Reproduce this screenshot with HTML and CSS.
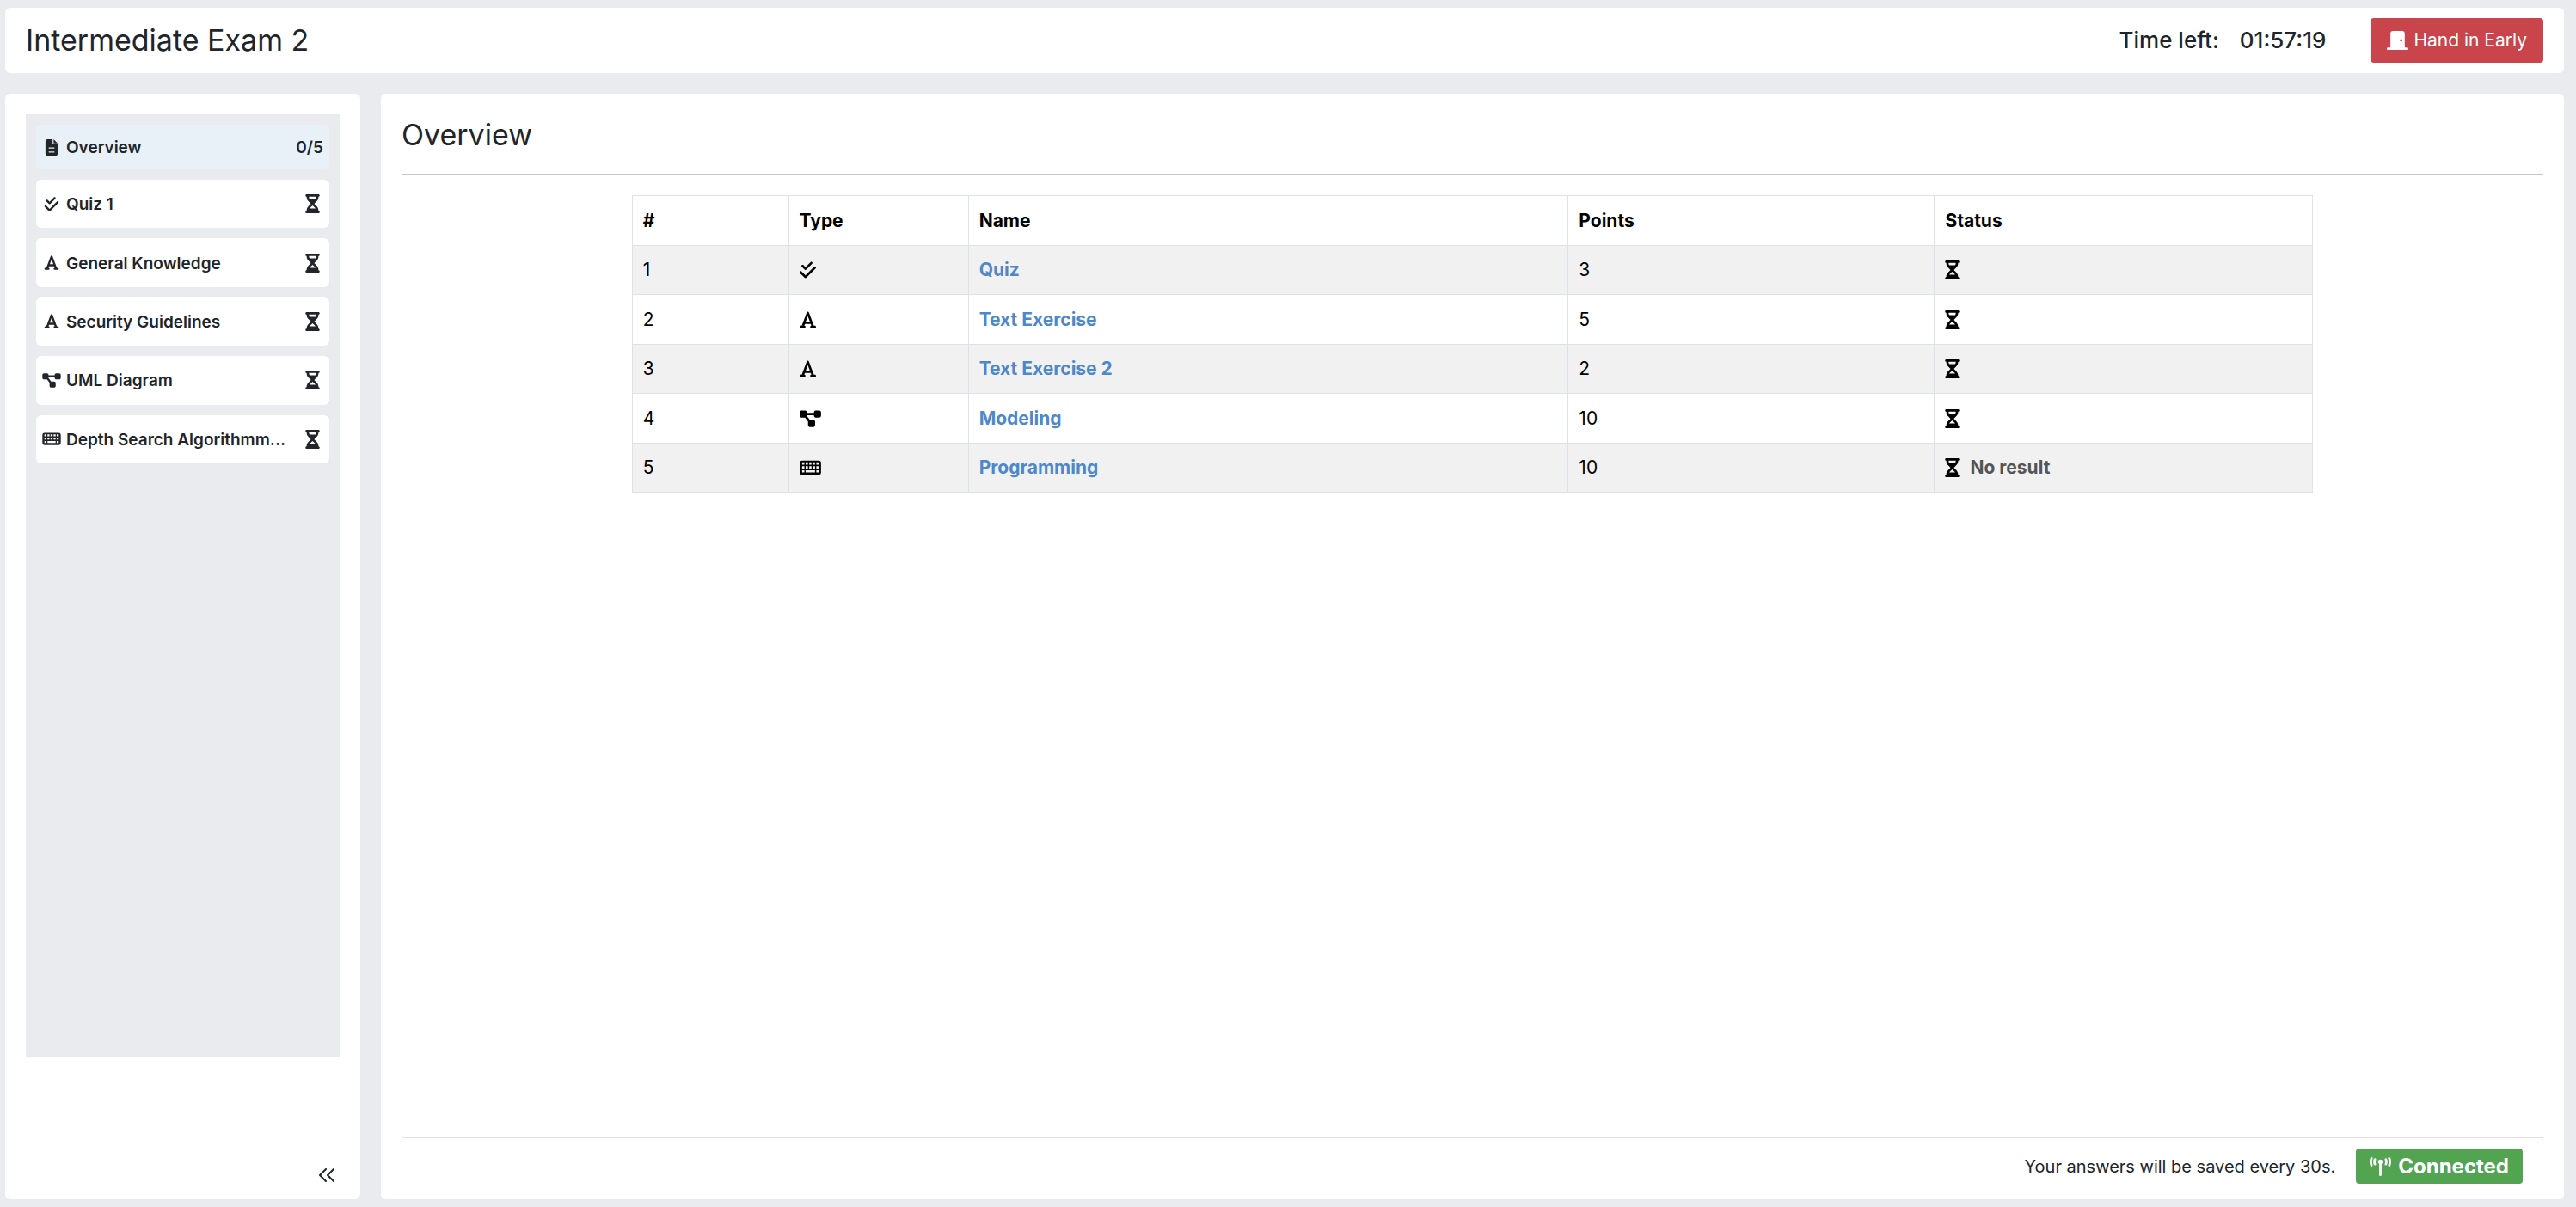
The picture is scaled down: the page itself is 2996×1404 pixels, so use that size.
FILE: index.html
```html
<!DOCTYPE html>
<html lang="en">
<head>
<meta charset="utf-8">
<title>Intermediate Exam 2</title>
<link rel="stylesheet" href="styles.css">
</head>
<body>
<svg class="sprite" aria-hidden="true">
  <symbol id="hourglass" viewBox="0 0 384 512"><path d="M32 0C14.3 0 0 14.3 0 32S14.3 64 32 64V75c0 42.4 16.9 83.1 46.9 113.1L146.7 256 78.9 323.9C48.9 353.9 32 394.6 32 437v11c-17.7 0-32 14.3-32 32s14.3 32 32 32H352c17.7 0 32-14.3 32-32s-14.3-32-32-32V437c0-42.4-16.9-83.1-46.9-113.1L237.3 256l67.9-67.9c30-30 46.9-70.7 46.9-113.1V64c17.7 0 32-14.3 32-32s-14.3-32-32-32H32zM96 75V64H288V75c0 19-5.6 37.4-16 53H112c-10.3-15.6-16-34-16-53zm16 309c3.5-5.3 7.6-10.3 12.1-14.9L192 301.3l67.9 67.9c4.6 4.6 8.6 9.6 12.1 14.9H112z"/></symbol>
  <symbol id="text" viewBox="0 0 448 512"><path d="M254 52.8C249.3 40.3 237.3 32 224 32s-25.3 8.3-30 20.8L57.8 416H32c-17.7 0-32 14.3-32 32s14.3 32 32 32h96c17.7 0 32-14.3 32-32s-14.3-32-32-32h-1.8l18-48H303.8l18 48H320c-17.7 0-32 14.3-32 32s14.3 32 32 32h96c17.7 0 32-14.3 32-32s-14.3-32-32-32H390.2L254 52.8zM279.8 304H168.2L224 155.1 279.8 304z"/></symbol>
  <symbol id="quiz" viewBox="0 0 448 512"><path d="M342.6 86.6c12.5-12.5 12.5-32.8 0-45.3s-32.8-12.5-45.3 0L160 178.7l-57.4-57.4c-12.5-12.5-32.8-12.5-45.3 0s-12.5 32.8 0 45.3l80 80c12.5 12.5 32.8 12.5 45.3 0l160-160zm96 128c12.5-12.5 12.5-32.8 0-45.3s-32.8-12.5-45.3 0L160 402.7 54.6 297.4c-12.5-12.5-32.8-12.5-45.3 0s-12.5 32.8 0 45.3l128 128c12.5 12.5 32.8 12.5 45.3 0l256-256z"/></symbol>
  <symbol id="modeling" viewBox="0 0 576 512"><path d="M0 80C0 53.5 21.5 32 48 32h96c26.5 0 48 21.5 48 48V96H384V80c0-26.5 21.5-48 48-48h96c26.5 0 48 21.5 48 48v96c0 26.5-21.5 48-48 48H432c-26.5 0-48-21.5-48-48V160H192v16c0 1.7-.1 3.4-.3 5L272 288h96c26.5 0 48 21.5 48 48v96c0 26.5-21.5 48-48 48H272c-26.5 0-48-21.5-48-48V336c0-1.7 .1-3.4 .3-5L144 224H48c-26.5 0-48-21.5-48-48V80z"/></symbol>
  <symbol id="keyboard" viewBox="0 0 576 512"><path fill-rule="evenodd" d="M64 64H512a64 64 0 0 1 64 64V384a64 64 0 0 1-64 64H64a64 64 0 0 1-64-64V128a64 64 0 0 1 64-64zM64 112h62v62H64zM160 112h62v62h-62zM256 112h62v62h-62zM352 112h62v62h-62zM448 112h62v62h-62zM64 216h62v62H64zM160 216h62v62h-62zM256 216h62v62h-62zM352 216h62v62h-62zM448 216h62v62h-62zM64 324h62v62H64zM160 324h254v62H160zM448 324h62v62h-62z"/></symbol>
  <symbol id="file" viewBox="0 0 384 512"><path d="M64 0C28.7 0 0 28.7 0 64V448c0 35.3 28.7 64 64 64H320c35.3 0 64-28.7 64-64V160H256c-17.7 0-32-14.3-32-32V0H64zM256 0V128H384L256 0zM112 256H272c8.8 0 16 7.2 16 16s-7.2 16-16 16H112c-8.8 0-16-7.2-16-16s7.2-16 16-16zm0 64H272c8.8 0 16 7.2 16 16s-7.2 16-16 16H112c-8.8 0-16-7.2-16-16s7.2-16 16-16zm0 64H272c8.8 0 16 7.2 16 16s-7.2 16-16 16H112c-8.8 0-16-7.2-16-16s7.2-16 16-16z"/></symbol>
  <symbol id="door" viewBox="0 0 576 512"><path d="M96 64c0-35.3 28.7-64 64-64H416c35.3 0 64 28.7 64 64V448h64c17.7 0 32 14.3 32 32s-14.3 32-32 32H32c-17.7 0-32-14.3-32-32s14.3-32 32-32H96V64zM384 288a32 32 0 1 0 0-64 32 32 0 1 0 0 64z"/></symbol>
  <symbol id="broadcast" viewBox="0 0 576 512"><path d="M80.3 44C69.8 69.9 64 98.2 64 128s5.8 58.1 16.3 84c6.6 16.4-1.3 35-17.7 41.7s-35-1.3-41.7-17.7C7.4 202.6 0 166.1 0 128S7.4 53.4 20.9 20C27.6 3.6 46.2-4.3 62.6 2.3S86.9 27.6 80.3 44zM555.1 20C568.6 53.4 576 89.9 576 128s-7.4 74.6-20.9 108c-6.6 16.4-25.3 24.3-41.7 17.7S489.1 228.4 495.7 212c10.5-25.9 16.3-54.2 16.3-84s-5.8-58.1-16.3-84C489.1 27.6 497 9 513.4 2.3s35 1.3 41.7 17.7zM352 128c0 23.7-12.9 44.4-32 55.4V480c0 17.7-14.3 32-32 32s-32-14.3-32-32V183.4c-19.1-11.1-32-31.7-32-55.4c0-35.3 28.7-64 64-64s64 28.7 64 64zM170.6 76.8C163.8 92.4 160 109.7 160 128s3.8 35.6 10.6 51.2c7.1 16.2-.3 35.1-16.5 42.1s-35.1-.3-42.1-16.5c-10.3-23.6-16-49.6-16-76.8s5.7-53.2 16-76.8c7.1-16.2 25.9-23.6 42.1-16.5s23.6 25.9 16.5 42.1zM464 51.2c10.3 23.6 16 49.6 16 76.8s-5.7 53.2-16 76.8c-7.1 16.2-25.9 23.6-42.1 16.5s-23.6-25.9-16.5-42.1c6.8-15.6 10.6-32.9 10.6-51.2s-3.8-35.6-10.6-51.2c-7.1-16.2 .3-35.1 16.5-42.1s35.1 .3 42.1 16.5z"/></symbol>
  <symbol id="collapse" viewBox="0 0 18 16"><path d="M8 1L1 8l7 7M17 1l-7 7 7 7" fill="none" stroke="currentColor" stroke-width="2" stroke-linecap="round" stroke-linejoin="round"/></symbol>
</svg>

<header class="card exam-bar">
  <h1 class="title">Intermediate Exam 2</h1>
  <div class="timer"><span>Time left:</span><span>01:57:19</span></div>
  <button class="hand-in" type="button"><svg class="icon-wide"><use href="#door"/></svg>Hand in Early</button>
</header>

<div class="columns">
  <aside class="card sidebar">
    <nav class="nav" aria-label="Exercises">
      <a class="nav-item active" href="#"><svg class="icon"><use href="#file"/></svg><span class="label">Overview</span><span class="count">0/5</span></a>
      <div class="exercises">
        <a class="nav-item" href="#"><svg class="icon"><use href="#quiz"/></svg><span class="label">Quiz 1</span><svg class="state"><use href="#hourglass"/></svg></a>
        <a class="nav-item" href="#"><svg class="icon"><use href="#text"/></svg><span class="label">General Knowledge</span><svg class="state"><use href="#hourglass"/></svg></a>
        <a class="nav-item" href="#"><svg class="icon"><use href="#text"/></svg><span class="label">Security Guidelines</span><svg class="state"><use href="#hourglass"/></svg></a>
        <a class="nav-item" href="#"><svg class="icon"><use href="#modeling"/></svg><span class="label">UML Diagram</span><svg class="state"><use href="#hourglass"/></svg></a>
        <a class="nav-item" href="#"><svg class="icon"><use href="#keyboard"/></svg><span class="label">Depth Search Algorithmm...</span><svg class="state"><use href="#hourglass"/></svg></a>
      </div>
    </nav>
    <button class="collapse" type="button" aria-label="Collapse"><svg class="collapse-icon"><use href="#collapse"/></svg></button>
  </aside>

  <main class="card content">
    <h2 class="title heading">Overview</h2>
    <table class="overview">
      <colgroup><col class="c-num"><col class="c-type"><col class="c-name"><col class="c-points"><col></colgroup>
      <thead><tr><th>#</th><th>Type</th><th>Name</th><th>Points</th><th>Status</th></tr></thead>
      <tbody>
        <tr><td>1</td><td><svg class="type narrow"><use href="#quiz"/></svg></td><td><a href="#">Quiz</a></td><td>3</td><td><svg class="state"><use href="#hourglass"/></svg></td></tr>
        <tr><td>2</td><td><svg class="type narrow"><use href="#text"/></svg></td><td><a href="#">Text Exercise</a></td><td>5</td><td><svg class="state"><use href="#hourglass"/></svg></td></tr>
        <tr><td>3</td><td><svg class="type narrow"><use href="#text"/></svg></td><td><a href="#">Text Exercise 2</a></td><td>2</td><td><svg class="state"><use href="#hourglass"/></svg></td></tr>
        <tr><td>4</td><td><svg class="type"><use href="#modeling"/></svg></td><td><a href="#">Modeling</a></td><td>10</td><td><svg class="state"><use href="#hourglass"/></svg></td></tr>
        <tr><td>5</td><td><svg class="type"><use href="#keyboard"/></svg></td><td><a href="#">Programming</a></td><td>10</td><td><div class="status"><svg class="state"><use href="#hourglass"/></svg><span class="result">No result</span></div></td></tr>
      </tbody>
    </table>
    <footer class="save-bar">
      <span>Your answers will be saved every 30s.</span>
      <span class="badge"><svg class="icon-wide"><use href="#broadcast"/></svg>Connected</span>
    </footer>
  </main>
</div>
</body>
</html>
```
FILE: styles.css
```css
* { box-sizing: border-box; }

body {
  margin: 0;
  min-height: 100vh;
  padding: 9px 14px 9px 6px;
  display: flex;
  flex-direction: column;
  gap: 24px;
  background: #eaebef;
  color: #212529;
  font-family: Inter, "Liberation Sans", sans-serif;
  font-size: 21px;
  line-height: 32px;
}

svg { fill: currentColor; flex: none; }
a { color: inherit; text-decoration: none; }
button { font: inherit; border: 0; cursor: pointer; }

.sprite { display: none; }

.card {
  background: #fff;
  border-radius: 6px;
}

.title {
  margin: 0;
  font-size: 34px;
  line-height: 44px;
  font-weight: 400;
}

.exam-bar {
  display: flex;
  align-items: center;
  padding: 12px 24px;
}

.timer {
  display: flex;
  gap: 24px;
  margin: 0 52px 0 auto;
  font-size: 26px;
  font-weight: 500;
}

.hand-in {
  display: flex;
  align-items: center;
  gap: 6px;
  height: 52px;
  padding: 0 19px;
  border-radius: 4px;
  background: #ca444b;
  color: #fff;
}

.icon-wide { width: 25px; height: 24px; }

.columns {
  flex: 1;
  display: flex;
  gap: 24px;
}

.sidebar {
  width: 413px;
  flex: none;
  padding: 24px;
  display: flex;
  flex-direction: column;
}

.nav {
  flex: 1;
  margin-bottom: 120px;
  padding: 12px;
  background: #eaebef;
  display: flex;
  flex-direction: column;
  gap: 12px;
  font-size: 19px;
  font-weight: 600;
}

.exercises {
  display: grid;
  grid-auto-rows: 1fr;
  gap: 12px;
  min-height: 330px;
}

.nav-item {
  display: flex;
  align-items: center;
  gap: 6px;
  min-height: 52px;
  padding: 0 7px;
  border-radius: 6px;
  background: #fff;
}

.nav-item.active { background: #e9f1f8; }
.nav-item .state { margin-right: 4px; }

.icon { width: 22px; height: 19px; }
.label, .count { padding-top: 2px; }
.label { flex: 1; white-space: nowrap; }
.state { width: 17px; height: 22px; }

.collapse {
  align-self: flex-end;
  display: flex;
  padding: 10px 6px;
  margin-bottom: -14px;
  background: none;
  color: #212529;
}

.collapse-icon { width: 18px; height: 16px; }

.content {
  flex: 1;
  min-width: 0;
  padding: 24px 24px 18px;
  display: flex;
  flex-direction: column;
}

.heading {
  padding: 2px 0 23px;
  border-bottom: 1px solid #c4c6c8;
}

.overview {
  width: 78.5%;
  margin: 24px auto 0;
  border-collapse: collapse;
  table-layout: fixed;
  color: #000;
}

.overview th,
.overview td {
  height: 57px;
  padding: 0 12px;
  border: 1px solid #dee2e6;
  text-align: left;
  vertical-align: middle;
}

.overview th,
.overview tr:nth-child(even) td { height: 58px; }

.overview th, .overview a { font-weight: 700; }
.overview tbody tr:nth-child(odd) { background: #f1f1f1; }
.overview a { color: #4e88c9; }
.overview svg { display: block; }

.status { display: flex; align-items: center; gap: 12px; }
.result { color: #555; font-weight: 700; }

.c-num { width: 9.3%; }
.c-type { width: 10.7%; }
.c-name { width: 35.7%; }
.c-points { width: 21.8%; }

.type { width: 25px; height: 22px; }
.narrow { width: 19px; }

.save-bar {
  margin-top: auto;
  padding: 12px 24px 0;
  border-top: 1px solid #e0e1e2;
  display: flex;
  align-items: center;
  justify-content: flex-end;
  gap: 24px;
  font-size: 20px;
}

.badge {
  display: flex;
  align-items: center;
  gap: 8px;
  height: 41px;
  padding: 0 16px;
  border-radius: 4px;
  background: #53a451;
  color: #fff;
  font-size: 24px;
  font-weight: 700;
}
```
